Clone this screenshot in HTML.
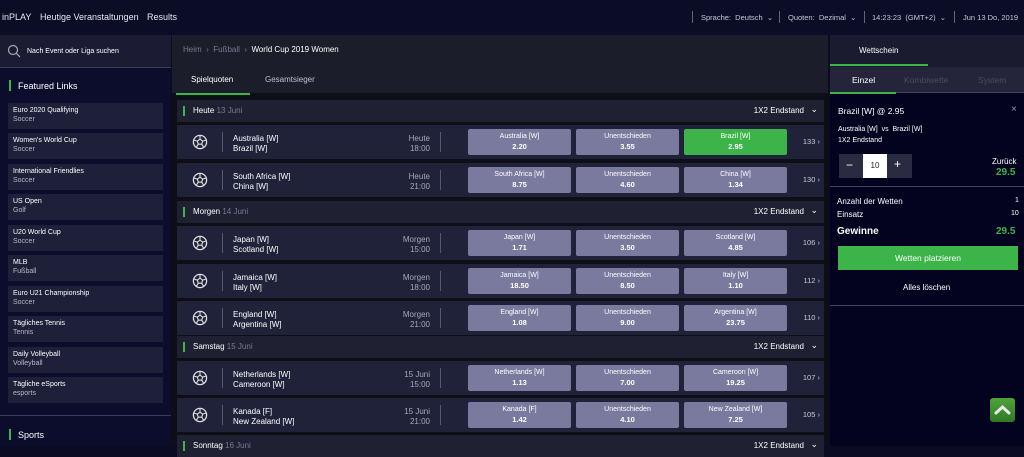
<!DOCTYPE html>
<html><head><meta charset="utf-8"><style>
*{margin:0;padding:0;box-sizing:border-box}
body{width:1024px;height:446px;overflow:hidden;background:#0b0c24;font-family:"Liberation Sans",sans-serif;color:#e6e6ee;position:relative;font-size:8px}
.a{position:absolute}
.top{left:0;top:0;width:1024px;height:35px;background:#0b0c26}
.top span{position:absolute;top:12px;font-size:9px;color:#e8e8f0}
.tr{font-size:7.5px!important;color:#c8c8d8!important;top:13px!important}
.vs{position:absolute;top:11px;width:1px;height:12px;background:#666}
.side{left:0;top:35px;width:171px;height:411px;background:#0c0d2c}
.search{left:0;top:35px;width:171px;height:33px;background:#1b1c33;border-bottom:1px solid #3a3c5a}
.card{position:absolute;left:8px;width:155px;height:26px;background:#1e1f38;padding:3px 5px;font-size:7px;line-height:9px;color:#fff}
.card i{font-style:normal;color:#b8b8c8;display:block}
.main{left:172px;top:35px;width:656px;height:411px;background:#0e0e17}
.bc{left:172px;top:35px;width:656px;height:58px;background:#1c1d2a}
.hdr{position:absolute;left:177px;width:647px;height:22px;background:#1f2133;font-size:8px}
.hdr b{position:absolute;left:6px;top:6px;width:2px;height:10px;background:#3cb44a}
.hdr .t{position:absolute;left:16px;top:6px;color:#fff}
.hdr .t em{font-style:normal;color:#777a90}
.hdr .m{position:absolute;right:20px;top:6px;color:#fff}
.hdr .c{position:absolute;right:6px;top:4px;color:#fff;font-size:9px}
.row{position:absolute;left:177px;width:647px;height:34px;background:#20223a}
.ball{position:absolute;left:15px;top:9px;width:16px;height:16px}
.d1{position:absolute;left:45px;top:7px;width:1px;height:20px;background:#555870}
.tm{position:absolute;left:56px;top:9px;font-size:8px;line-height:10px;color:#fff}
.ti{position:absolute;right:394px;top:9px;font-size:8px;line-height:10px;color:#a8a8b8;text-align:right}
.d2{position:absolute;left:263px;top:7px;width:1px;height:20px;background:#555870}
.btn{position:absolute;top:4px;width:103px;height:26px;background:#7a7a9e;border-radius:2px;text-align:center;font-size:7px;line-height:10px;padding-top:3px;color:#fff}
.btn b{font-size:7.5px}
.g{background:#3cb44a}
.n{position:absolute;right:4px;top:12px;color:#c8c8d8;font-size:7.5px}
.right{left:830px;top:35px;width:194px;height:411px;background:#030320}
</style></head><body>
<svg width="0" height="0" style="position:absolute"><defs><g id="b"><circle cx="8" cy="8" r="6.6" fill="none" stroke="#e0e0e0" stroke-width="1.3"/><path d="M8 5.2 L10.7 7.1 L9.7 10.2 L6.3 10.2 L5.3 7.1 Z" fill="none" stroke="#e0e0e0" stroke-width="1.1"/><path d="M8 5.2 L8 1.6 M10.7 7.1 L14.2 6 M9.7 10.2 L11.8 13.3 M6.3 10.2 L4.2 13.3 M5.3 7.1 L1.8 6" stroke="#e0e0e0" stroke-width="1.1"/></g></defs></svg>
<div class="a top">
<span style="left:2px">inPLAY</span><span style="left:40px">Heutige Veranstaltungen</span><span style="left:147px">Results</span>
<div class="vs" style="left:692px"></div><span class="tr" style="left:701px">Sprache:&nbsp; Deutsch&nbsp; ⌄</span>
<div class="vs" style="left:779px"></div><span class="tr" style="left:788px">Quoten:&nbsp; Dezimal&nbsp; ⌄</span>
<div class="vs" style="left:864px"></div><span class="tr" style="left:872px">14:23:23&nbsp; (GMT+2)&nbsp; ⌄</span>
<div class="vs" style="left:954px"></div><span class="tr" style="left:963px">Jun 13 Do, 2019</span>
</div>
<div class="a side"></div>
<div class="a search"><svg class="a" style="left:7px;top:9px" width="14" height="14"><circle cx="6" cy="6" r="4.5" fill="none" stroke="#aaa" stroke-width="1.2"/><line x1="9.5" y1="9.5" x2="13" y2="13" stroke="#aaa" stroke-width="1.2"/></svg><span class="a" style="left:27px;top:13px;font-size:7px;color:#fff">Nach Event oder Liga suchen</span></div>
<div class="a" style="left:9px;top:80px;width:2px;height:11px;background:#3cb44a"></div>
<span class="a" style="left:18px;top:81px;font-size:9px;color:#fff">Featured Links</span>
<div class="card" style="top:103px">Euro 2020 Qualifying<i>Soccer</i></div>
<div class="card" style="top:133px">Women's World Cup<i>Soccer</i></div>
<div class="card" style="top:164px">International Friendlies<i>Soccer</i></div>
<div class="card" style="top:194px">US Open<i>Golf</i></div>
<div class="card" style="top:225px">U20 World Cup<i>Soccer</i></div>
<div class="card" style="top:255px">MLB<i>Fußball</i></div>
<div class="card" style="top:286px">Euro U21 Championship<i>Soccer</i></div>
<div class="card" style="top:316px">Tägliches Tennis<i>Tennis</i></div>
<div class="card" style="top:347px">Daily Volleyball<i>Volleyball</i></div>
<div class="card" style="top:377px">Tägliche eSports<i>esports</i></div>
<div class="a" style="left:0;top:415px;width:171px;height:1px;background:#3a3c5a"></div>
<div class="a" style="left:9px;top:429px;width:2px;height:11px;background:#3cb44a"></div>
<span class="a" style="left:18px;top:430px;font-size:9px;color:#fff">Sports</span>

<div class="a main"></div>
<div class="a bc"></div>
<span class="a" style="left:183px;top:45px;font-size:8px;color:#777a90">Heim&nbsp; ›&nbsp; Fußball&nbsp; ›&nbsp; <span style="color:#fff">World Cup 2019 Women</span></span>
<span class="a" style="left:191px;top:75px;font-size:8px;color:#fff">Spielquoten</span>
<span class="a" style="left:265px;top:75px;font-size:8px;color:#c0c0cc">Gesamtsieger</span>
<div class="a" style="left:176px;top:93px;width:74px;height:2px;background:#3cb44a"></div>

<div class="hdr" style="top:100px"><b></b><span class="t">Heute <em>13 Juni</em></span><span class="m">1X2 Endstand</span><span class="c">⌄</span></div>
<div class="row" style="top:125px"><svg class="ball"><use href="#b"/></svg><div class="d1"></div><div class="tm">Australia [W]<br>Brazil [W]</div><div class="ti">Heute<br>18:00</div><div class="d2"></div>
<div class="btn" style="left:291px">Australia [W]<br><b>2.20</b></div><div class="btn" style="left:399px">Unentschieden<br><b>3.55</b></div><div class="btn g" style="left:507px">Brazil [W]<br><b>2.95</b></div><span class="n">133 ›</span></div>
<div class="row" style="top:163px"><svg class="ball"><use href="#b"/></svg><div class="d1"></div><div class="tm">South Africa [W]<br>China [W]</div><div class="ti">Heute<br>21:00</div><div class="d2"></div>
<div class="btn" style="left:291px">South Africa [W]<br><b>8.75</b></div><div class="btn" style="left:399px">Unentschieden<br><b>4.60</b></div><div class="btn" style="left:507px">China [W]<br><b>1.34</b></div><span class="n">130 ›</span></div>

<div class="hdr" style="top:201px"><b></b><span class="t">Morgen <em>14 Juni</em></span><span class="m">1X2 Endstand</span><span class="c">⌄</span></div>
<div class="row" style="top:226px"><svg class="ball"><use href="#b"/></svg><div class="d1"></div><div class="tm">Japan [W]<br>Scotland [W]</div><div class="ti">Morgen<br>15:00</div><div class="d2"></div>
<div class="btn" style="left:291px">Japan [W]<br><b>1.71</b></div><div class="btn" style="left:399px">Unentschieden<br><b>3.50</b></div><div class="btn" style="left:507px">Scotland [W]<br><b>4.85</b></div><span class="n">106 ›</span></div>
<div class="row" style="top:264px"><svg class="ball"><use href="#b"/></svg><div class="d1"></div><div class="tm">Jamaica [W]<br>Italy [W]</div><div class="ti">Morgen<br>18:00</div><div class="d2"></div>
<div class="btn" style="left:291px">Jamaica [W]<br><b>18.50</b></div><div class="btn" style="left:399px">Unentschieden<br><b>8.50</b></div><div class="btn" style="left:507px">Italy [W]<br><b>1.10</b></div><span class="n">112 ›</span></div>
<div class="row" style="top:301px"><svg class="ball"><use href="#b"/></svg><div class="d1"></div><div class="tm">England [W]<br>Argentina [W]</div><div class="ti">Morgen<br>21:00</div><div class="d2"></div>
<div class="btn" style="left:291px">England [W]<br><b>1.08</b></div><div class="btn" style="left:399px">Unentschieden<br><b>9.00</b></div><div class="btn" style="left:507px">Argentina [W]<br><b>23.75</b></div><span class="n">110 ›</span></div>

<div class="hdr" style="top:336px"><b></b><span class="t">Samstag <em>15 Juni</em></span><span class="m">1X2 Endstand</span><span class="c">⌄</span></div>
<div class="row" style="top:361px"><svg class="ball"><use href="#b"/></svg><div class="d1"></div><div class="tm">Netherlands [W]<br>Cameroon [W]</div><div class="ti">15 Juni<br>15:00</div><div class="d2"></div>
<div class="btn" style="left:291px">Netherlands [W]<br><b>1.13</b></div><div class="btn" style="left:399px">Unentschieden<br><b>7.00</b></div><div class="btn" style="left:507px">Cameroon [W]<br><b>19.25</b></div><span class="n">107 ›</span></div>
<div class="row" style="top:398px"><svg class="ball"><use href="#b"/></svg><div class="d1"></div><div class="tm">Kanada [F]<br>New Zealand [W]</div><div class="ti">15 Juni<br>21:00</div><div class="d2"></div>
<div class="btn" style="left:291px">Kanada [F]<br><b>1.42</b></div><div class="btn" style="left:399px">Unentschieden<br><b>4.10</b></div><div class="btn" style="left:507px">New Zealand [W]<br><b>7.25</b></div><span class="n">105 ›</span></div>
<div class="hdr" style="top:435px"><b></b><span class="t">Sonntag <em>16 Juni</em></span><span class="m">1X2 Endstand</span><span class="c">⌄</span></div>

<div class="a right"></div>
<div class="a" style="left:830px;top:35px;width:194px;height:32px;background:#1a1b2e"></div>
<span class="a" style="left:859px;top:46px;font-size:8px;color:#fff">Wettschein</span>
<div class="a" style="left:830px;top:64px;width:98px;height:2px;background:#3cb44a"></div>
<div class="a" style="left:830px;top:67px;width:194px;height:26px;background:#24253a"></div>
<span class="a" style="left:852px;top:75px;font-size:8.5px;color:#fff">Einzel</span>
<span class="a" style="left:904px;top:75px;font-size:8.5px;color:#4a4c64">Kombiwette</span>
<span class="a" style="left:978px;top:75px;font-size:8.5px;color:#4a4c64">System</span>
<div class="a" style="left:830px;top:92px;width:66px;height:2px;background:#3cb44a"></div>
<div class="a" style="left:896px;top:92px;width:128px;height:1px;background:#444660"></div>
<span class="a" style="left:838px;top:106px;font-size:8.5px;color:#fff">Brazil [W] @ 2.95</span>
<span class="a" style="left:1011px;top:104px;font-size:10px;color:#999">×</span>
<span class="a" style="left:838px;top:126px;font-size:7px;color:#fff">Australia [W]&nbsp; vs&nbsp; Brazil [W]</span>
<span class="a" style="left:838px;top:137px;font-size:7px;color:#fff">1X2 Endstand</span>
<div class="a" style="left:839px;top:154px;width:73px;height:24px;background:#2a2b40"></div>
<div class="a" style="left:863px;top:154px;width:24px;height:24px;background:#fff;color:#222;text-align:center;line-height:24px;font-size:8px">10</div>
<span class="a" style="left:846px;top:158px;font-size:12px;color:#fff">−</span>
<span class="a" style="left:894px;top:157px;font-size:12px;color:#fff">+</span>
<span class="a" style="left:992px;top:157px;font-size:8px;color:#fff">Zurück</span>
<span class="a" style="left:996px;top:167px;font-size:10px;font-weight:bold;color:#3cb44a">29.5</span>
<div class="a" style="left:830px;top:186px;width:194px;height:1px;background:#444660"></div>
<span class="a" style="left:837px;top:197px;font-size:8px;color:#fff">Anzahl der Wetten</span><span class="a" style="left:1015px;top:197px;font-size:7px;color:#fff">1</span>
<span class="a" style="left:837px;top:210px;font-size:8px;color:#fff">Einsatz</span><span class="a" style="left:1011px;top:210px;font-size:7px;color:#fff">10</span>
<span class="a" style="left:837px;top:226px;font-size:10px;font-weight:bold;color:#fff">Gewinne</span>
<span class="a" style="left:996px;top:226px;font-size:10px;font-weight:bold;color:#3cb44a">29.5</span>
<div class="a" style="left:838px;top:246px;width:180px;height:24px;background:#3cb44a;color:#fff;text-align:center;line-height:24px;font-size:8.5px">Wetten platzieren</div>
<span class="a" style="left:903px;top:283px;font-size:8px;color:#fff">Alles löschen</span>
<div class="a" style="left:830px;top:305px;width:194px;height:1px;background:#444660"></div>
<div class="a" style="left:990px;top:398px;width:25px;height:24px;border-radius:3px;background:linear-gradient(#4fa33a,#2e7a26)"><svg width="25" height="24"><path d="M6 15 L12.5 9 L19 15" fill="none" stroke="#e8e8e8" stroke-width="3" stroke-linecap="round"/></svg></div>
</body></html>
